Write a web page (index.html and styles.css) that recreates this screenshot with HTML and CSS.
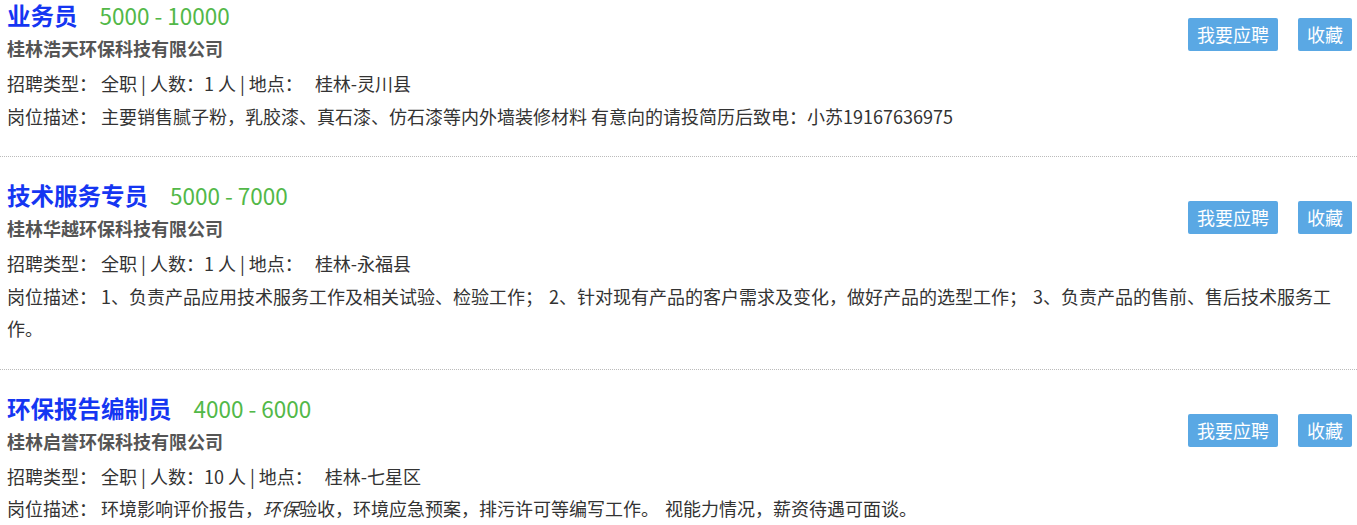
FILE: index.html
```html
<!DOCTYPE html>
<html lang="zh-CN">
<head>
    <meta charset="UTF-8">
    <title>招聘信息</title>
    <link rel="stylesheet" href="styles.css">
</head>
<body>
    <div class="job-list">
        <div class="job-item">
            <div class="job-ops">
                <a class="btn" href="#">我要应聘</a>
                <a class="btn" href="#">收藏</a>
            </div>
            <div class="job-title">
                <span class="name">业务员</span>
                <span class="salary">5000 - 10000</span>
            </div>
            <div class="company">桂林浩天环保科技有限公司</div>
            <div class="line"><span class="label">招聘类型：</span>全职 | 人数：1 人 | 地点：<span class="gap"></span>桂林-灵川县</div>
            <div class="line"><span class="label">岗位描述：</span>主要销售腻子粉，乳胶漆、真石漆、仿石漆等内外墙装修材料 有意向的请投简历后致电：小苏19167636975</div>
        </div>
        <div class="job-item">
            <div class="job-ops">
                <a class="btn" href="#">我要应聘</a>
                <a class="btn" href="#">收藏</a>
            </div>
            <div class="job-title">
                <span class="name">技术服务专员</span>
                <span class="salary">5000 - 7000</span>
            </div>
            <div class="company">桂林华越环保科技有限公司</div>
            <div class="line"><span class="label">招聘类型：</span>全职 | 人数：1 人 | 地点：<span class="gap"></span>桂林-永福县</div>
            <div class="line"><span class="label">岗位描述：</span>1、负责产品应用技术服务工作及相关试验、检验工作；<span class="sp"></span>2、针对现有产品的客户需求及变化，做好产品的选型工作；<span class="sp"></span>3、负责产品的售前、售后技术服务工作。</div>
        </div>
        <div class="job-item">
            <div class="job-ops">
                <a class="btn" href="#">我要应聘</a>
                <a class="btn" href="#">收藏</a>
            </div>
            <div class="job-title">
                <span class="name">环保报告编制员</span>
                <span class="salary">4000 - 6000</span>
            </div>
            <div class="company">桂林启誉环保科技有限公司</div>
            <div class="line"><span class="label">招聘类型：</span>全职 | 人数：10 人 | 地点：<span class="gap"></span>桂林-七星区</div>
            <div class="line"><span class="label">岗位描述：</span>环境影响评价报告，<em>环保</em>验收，环境应急预案，排污许可等编写工作。<span class="sp"></span>视能力情况，薪资待遇可面谈。</div>
        </div>
    </div>
</body>
</html>
```

FILE: styles.css
```css
body {
    margin: 0;
    background: #fff;
    font-family: "Noto Sans CJK SC", "Noto Sans", sans-serif;
    color: #333;
}
.job-list {
    margin: 0;
}
.job-item {
    padding: 23px 5px 24px 7px;
    border-bottom: 1px dotted #bbb;
}
.job-item:first-child {
    padding-top: 0;
}
.job-ops {
    float: right;
    display: flex;
    gap: 20px;
    margin-top: 21px;
}
.job-item:first-child .job-ops {
    margin-top: 18px;
}
.btn {
    display: block;
    height: 33px;
    line-height: 33px;
    padding: 0 9px;
    background: #5aa8e4;
    color: #fff;
    font-size: 18px;
    text-decoration: none;
    border-radius: 2px;
}
.job-title {
    display: flex;
    align-items: baseline;
    gap: 22px;
    height: 30px;
    line-height: 30px;
}
.job-title .name {
    font-size: 23.5px;
    font-weight: bold;
    color: #1536f2;
}
.job-title .salary {
    font-size: 22.5px;
    color: #52b848;
}
.company {
    font-size: 18px;
    font-weight: bold;
    color: #555;
    line-height: 37px;
}
.line {
    font-size: 18px;
    line-height: 32.5px;
}
.label {
    margin-right: 4px;
}
.gap {
    display: inline-block;
    width: 12px;
}
.sp {
    display: inline-block;
    width: 6px;
}
em {
    font-style: italic;
}
```
